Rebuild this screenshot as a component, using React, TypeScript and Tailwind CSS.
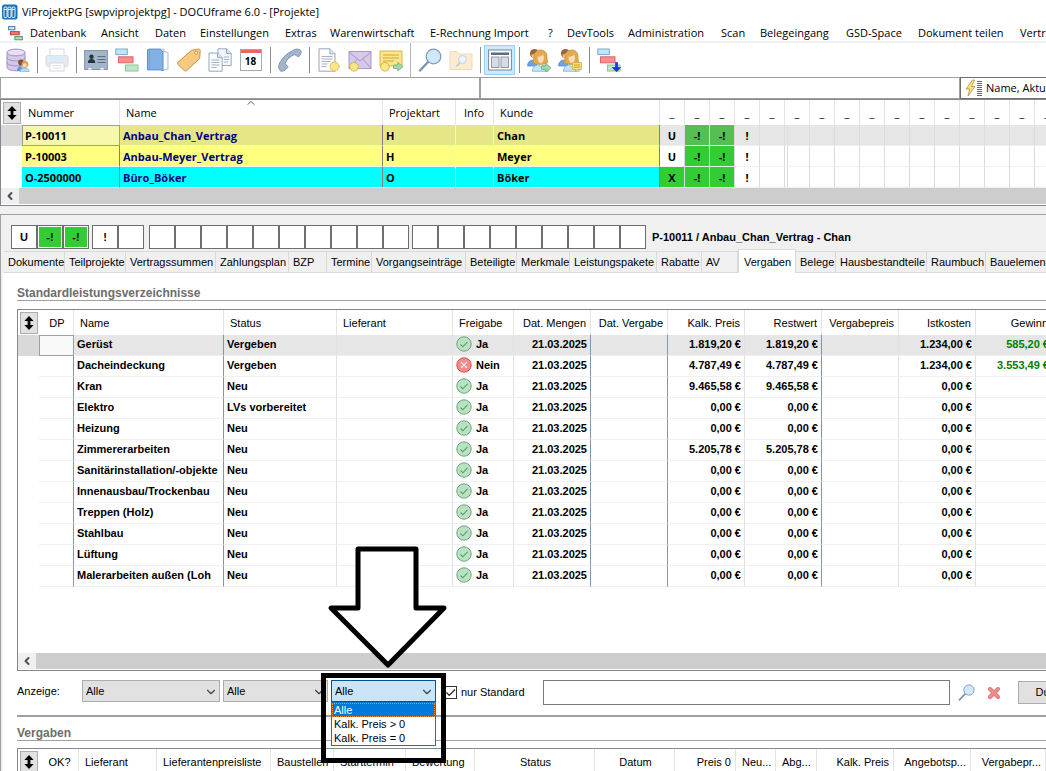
import React, { useState } from 'react';
import clsx from 'clsx';
import { ChevronDown, ChevronLeft } from 'lucide-react';

interface IconProps {
  children: React.ReactNode;
  className?: string;
}

const Svg: React.FC<IconProps> = ({ children, className = 'h-6 w-6' }) => (
  <svg viewBox="0 0 24 24" fill="none" className={className} aria-hidden="true">
    {children}
  </svg>
);

const MENU = [
  { label: 'Datenbank', width: 'w-[71px]' },
  { label: 'Ansicht', width: 'w-[54px]' },
  { label: 'Daten', width: 'w-[45px]' },
  { label: 'Einstellungen', width: 'w-[85px]' },
  { label: 'Extras', width: 'w-[45px]' },
  { label: 'Warenwirtschaft', width: 'w-[100px]' },
  { label: 'E-Rechnung Import', width: 'w-[118px]' },
  { label: '?', width: 'w-[19px]' },
  { label: 'DevTools', width: 'w-[61px]' },
  { label: 'Administration', width: 'w-[93px]' },
  { label: 'Scan', width: 'w-[39px]' },
  { label: 'Belegeingang', width: 'w-[86px]' },
  { label: 'GSD-Space', width: 'w-[72px]' },
  { label: 'Dokument teilen', width: 'w-[102px]' },
  { label: 'Vertrag', width: 'w-[60px]' },
];

/* ---------- toolbar icons ---------- */

const AppLogo = () => (
  <svg viewBox="0 0 16 16" className="h-4 w-4" aria-hidden="true">
    <rect x="0" y="0.5" width="15.5" height="15" rx="2.5" fill="#1673b8" />
    {[2, 6, 10].map((x) => (
      <g key={x}>
        <rect x={x} y="3" width="3" height="10.5" rx="1" fill="#1673b8" stroke="#fff" strokeWidth="0.9" />
        <path d={`M${x} 5.5h3`} stroke="#fff" strokeWidth="0.8" />
      </g>
    ))}
  </svg>
);

const Blocks: React.FC<{ className?: string; arrow?: boolean }> = ({ className, arrow }) => (
  <Svg className={className}>
    <rect x="0.8" y="1" width="11.5" height="5.6" fill="#bfe6fb" stroke="#7fa9cf" />
    <rect x="3.5" y="8.8" width="14.5" height="6" fill="#f78d8d" stroke="#dd6767" />
    <rect x="10.5" y="17" width="12.5" height="6" fill="#bfe5c4" stroke="#8dc497" />
    {arrow && <path d="M18.500 14.500v5h-3.200l4.200 4.300 4.200-4.300h-3.200v-5z" fill="#1838d8" stroke="#1129b8" strokeWidth="0.6" />}
  </Svg>
);

const MenuBlocks = () => (
  <Svg className="h-[15px] w-[15px]">
    <rect x="1" y="1" width="10" height="5" fill="#d6effc" stroke="#3b78b8" strokeWidth="1.6" />
    <rect x="4" y="9" width="14" height="5" fill="#e97d7d" stroke="#c23b3b" strokeWidth="1.6" />
    <rect x="11" y="17" width="12" height="5" fill="#b5dfbd" stroke="#4d9a62" strokeWidth="1.6" />
  </Svg>
);

const People: React.FC<{ badge?: 'arrow' | 'note' }> = ({ badge }) => (
  <Svg>
    <circle cx="7.5" cy="5.5" r="4.6" fill="#9c6245" />
    <path d="M4.5 6.5c2 0 4-1 5-2.500v6c-3 2-5 0-5-3.500z" fill="#f1c28f" />
    <path d="M.6 18c0-4 2-5.500 5-6l4 2v4z" fill="#6fa0e8" stroke="#4f7fcb" strokeWidth=".7" />
    <path d="M13.500 2c-4.500 0-6.500 3-6.500 7 0 3-.8 4-1.500 5.500 3 2.500 12 2.500 15.500 0C20 13 20 11 20 8.500 20 4.500 17.500 2 13.500 2z" fill="#e2a94d" stroke="#c08a37" strokeWidth=".7" />
    <path d="M10.200 8.500c3 0 5-1.200 6-2.500l1 3c0 4-1.500 6.300-3.500 6.300s-3.500-2.800-3.500-6.800z" fill="#fbdcb4" stroke="#d6a063" strokeWidth=".5" />
    <path d="M5.500 23.300c0-4.300 2.500-6 6-6.500l2.300 2 2.400-2c3.500.5 5 2.200 5 6.500z" fill="#c4e4fb" stroke="#7fb0d8" strokeWidth=".8" />
    {badge === 'arrow' && <path d="M14.500 18h4.300v-2.600L24 19.800l-5.200 4.200v-2.600h-4.300z" fill="#a4d9ac" stroke="#6fae7c" strokeWidth=".8" />}
    {badge === 'note' && (
      <>
        <path d="M14.500 14.500h9v7h-4l-2 2v-2h-3z" fill="#f8dc7c" stroke="#d2ae3d" strokeWidth=".8" />
        <path d="M16 17h6M16 19.200h6" stroke="#b48d28" strokeWidth=".7" />
      </>
    )}
  </Svg>
);

const DatabaseIcon = () => (
  <Svg>
    <path d="M1 4.500v14.800c0 2 4 3.500 9 3.500s9-1.500 9-3.500V4.500z" fill="#d6c8ea" stroke="#a291c0" />
    <ellipse cx="10" cy="4.500" rx="9" ry="3.400" fill="#e8def5" stroke="#a291c0" />
    <path d="M1 9.500c0 2 4 3.400 9 3.400s9-1.400 9-3.400M1 14.500c0 2 4 3.400 9 3.400s9-1.400 9-3.400" stroke="#a291c0" />
    <circle cx="15" cy="14.500" r="2.900" fill="#83513a" />
    <path d="M11 23c0-3 1.500-4.500 4-5l2 5z" fill="#5d92e0" />
    <circle cx="19" cy="16.300" r="3.400" fill="#dba24a" />
    <circle cx="18.700" cy="17.200" r="2" fill="#fbdcb4" />
    <path d="M13.800 24c0-2.800 2-4 4.700-4s4.700 1.200 4.700 4z" fill="#b4dcf8" stroke="#6fa2cd" strokeWidth=".6" />
  </Svg>
);

const PrinterIcon = () => (
  <Svg className="h-6 w-6 opacity-50">
    <rect x="5" y="1" width="14" height="8" fill="#fff" stroke="#aab6c2" />
    <rect x="1" y="7.500" width="22" height="11" rx="2" fill="#cfd9e4" stroke="#aab6c2" />
    <rect x="5" y="7.500" width="14" height="6" fill="#b6daf7" />
    <rect x="5" y="15" width="14" height="8" fill="#fff" stroke="#aab6c2" />
    <path d="M7.500 17.500h9M7.500 20h9" stroke="#b9c3ce" />
  </Svg>
);

const CardIcon = () => (
  <Svg>
    <rect x=".6" y="2.500" width="22.800" height="19" fill="#a3b5c9" stroke="#8296ac" />
    <circle cx="7.500" cy="8.700" r="2.200" fill="#26323f" />
    <path d="M3.800 15c0-3 1.500-4 3.700-4s3.700 1 3.700 4z" fill="#26323f" />
    <path d="M13.500 8.500h8M13.500 11.500h8M13.500 14.500h8" stroke="#5a6c80" />
    <path d="M4 21.500v-2h4v2M16 21.500v-2h4v2" fill="#fff" stroke="#8296ac" strokeWidth=".6" />
  </Svg>
);

const BookIcon = () => (
  <Svg>
    <path d="M16.500 3l5.500 1.500v16.500l-5.500 1.500z" fill="#f6fafe" stroke="#a8bdd6" />
    <path d="M3.500 1.200h14.500v2.300M16.500 5v16.500" stroke="#a8bdd6" />
    <path d="M1.500 1.800l2-.6h10.800l2.700 2.800v18.800l-2.700-.9H1.500z" fill="#82b1ea" stroke="#5f8fca" />
    <path d="M3.500 1.500v20.300" stroke="#6c9cd6" strokeWidth=".7" />
  </Svg>
);

const TagIcon = () => (
  <Svg>
    <path d="M14.500 2.300l7-1.300c1 0 1.700.6 1.700 1.500l-.5 8L9.500 22.700c-.6.6-1.400.6-2 0L.9 16.300c-.6-.6-.6-1.300 0-2z" fill="#f7c981" stroke="#c9953f" />
    <circle cx="19.200" cy="4.800" r="1.500" fill="#fff" stroke="#c9953f" />
  </Svg>
);

const DocsIcon = () => (
  <Svg>
    <path d="M10 .8h8.500l4.700 4.700v12H10z" fill="#f5f9fd" stroke="#96a7b8" />
    <path d="M18.500.8v4.700h4.700" fill="#d3e4f4" stroke="#96a7b8" />
    <path d="M1 5h8.500l4.700 4.700v13.500H1z" fill="#fbfdff" stroke="#96a7b8" />
    <path d="M9.500 5v4.700h4.700" fill="#d3e4f4" stroke="#96a7b8" />
    <path d="M3.500 12h8M3.500 14.500h8M3.500 17h8M3.500 19.500h5M16 9h5M16 11.500h5M16 14h4" stroke="#a2b0bd" />
  </Svg>
);

const CalendarIcon = () => (
  <span className="flex h-[22px] w-[22px] flex-col border border-[#a4aab2] bg-white">
    <span className="h-1 bg-[#f06464]" />
    <span className="flex-1 text-center font-['Open_Sans',sans-serif] text-[10px] leading-[17px] font-bold text-black">18</span>
  </span>
);

const PhoneIcon = () => (
  <Svg>
    <path d="M14.300 3c1.300-1.800 5.500-2.600 8-.9 1.600 1.300.8 4-1 6.100-.6.7-1.300.6-2 .1l-2.500-1.800C12 8.300 8.500 11.500 7 15.800l2.300 2c.7.600.7 1.300.1 2.100-1.700 2-4.800 4.100-6.700 3.100C.2 21.500.1 17.500 2.500 13.500 5.200 9 9.500 4.800 14.300 3z" fill="#a3b5ca" stroke="#7f93ab" />
  </Svg>
);

const DocBadgeIcon = () => (
  <Svg>
    <path d="M2 .8h11l5 5v17.400H2z" fill="#fafcfe" stroke="#9aa7b4" />
    <path d="M13 .8v5h5" fill="#dbe7f2" stroke="#9aa7b4" />
    <path d="M4.500 8.500h11M4.500 11h11M4.500 13.500h9M4.500 16h6M4.500 18.500h5" stroke="#a9b4bf" />
    <circle cx="17.500" cy="18.500" r="4.500" fill="#fbe688" stroke="#d3b544" strokeDasharray="2 .6" />
  </Svg>
);

const MailIcon = () => (
  <Svg>
    <rect x="1" y="3.500" width="22" height="17" fill="#d6c9ec" stroke="#a798c4" />
    <path d="M1 4l11 9 11-9M1 20l8.500-9M23 20l-8.500-9" stroke="#a798c4" />
    <circle cx="6" cy="18.800" r="4.300" fill="#fbe688" stroke="#d3b544" />
  </Svg>
);

const CertIcon = () => (
  <Svg>
    <rect x="1" y="3" width="22" height="15" fill="#fde58b" stroke="#d4b64f" />
    <path d="M4 7h16M4 10h16M4 13h11" stroke="#c9a93e" />
    <circle cx="6" cy="18.800" r="4.300" fill="#fbe688" stroke="#d3b544" />
    <path d="M14.500 17h4.300v-2.600L24 18.800l-5.200 4.200v-2.600h-4.300z" fill="#a4d9ac" stroke="#6fae7c" strokeWidth=".8" />
  </Svg>
);

const SearchIcon: React.FC<{ className?: string }> = ({ className }) => (
  <Svg className={className}>
    <path d="M10.500 13.500L2 22.500" stroke="#7f93a8" strokeWidth="2.400" strokeLinecap="round" />
    <circle cx="15.500" cy="8.500" r="7.300" fill="#cfe8fb" stroke="#7f9ab5" strokeWidth="1.200" />
  </Svg>
);

const FolderSearchIcon = () => (
  <Svg className="h-6 w-6 opacity-50">
    <path d="M1 21.500v-18h7l2 2.500h13v15.500z" fill="#fad9a0" stroke="#dfb87a" />
    <path d="M11.500 14l-4 4.500" stroke="#7f93a8" strokeWidth="1.600" />
    <circle cx="13.500" cy="11.500" r="4" fill="#d6ecfc" stroke="#8ba4bd" />
  </Svg>
);

const LayoutIcon = () => (
  <Svg>
    <rect x=".6" y="2" width="22.800" height="20" fill="#fff" stroke="#7b8794" />
    <rect x="3" y="4.500" width="18" height="2.500" fill="#5c6d80" />
    <rect x="3.500" y="9" width="7.500" height="10.500" fill="#d7dde4" stroke="#8f9ba8" />
    <rect x="13" y="9" width="7.500" height="10.500" fill="#d7dde4" stroke="#8f9ba8" />
  </Svg>
);

const ToolButton: React.FC<{ label: string; active?: boolean; children: React.ReactNode }> = ({ label, active, children }) => (
  <button
    type="button"
    aria-label={label}
    className={clsx(
      'flex h-[30px] w-[31px] shrink-0 items-center justify-center',
      active && 'border border-[#99d1ff] bg-[#cce8ff]'
    )}
  >
    {children}
  </button>
);

const Separator = () => (
  <span className="flex w-2 shrink-0 justify-center">
    <span className="h-[26px] w-px bg-[#8c8c8c]" />
  </span>
);

/* ---------- shared pieces ---------- */

const SortButton = () => (
  <button
    type="button"
    aria-label="Zeilen sortieren"
    className="mx-auto flex h-[22px] w-[18px] items-center justify-center border border-[#adadad] bg-[#e1e1e1]"
  >
    <svg viewBox="0 0 10 14" className="h-[14px] w-[10px]" aria-hidden="true">
      <path d="M5 0l4.600 5H6.400v4h3.200L5 14 .4 9h3.200V5H.4z" fill="#000" />
    </svg>
  </button>
);

const ScrollBar: React.FC<{ className?: string }> = ({ className }) => (
  <div className={clsx('flex h-4 bg-[#cdcdcd]', className)}>
    <button type="button" aria-label="Nach links" className="flex w-[18px] items-center justify-center bg-[#f0f0f0]">
      <ChevronLeft className="h-3 w-3 text-[#505050]" strokeWidth={4} />
    </button>
  </div>
);

const SectionTitle: React.FC<{ children: React.ReactNode }> = ({ children }) => (
  <h2 className="h-4 border-b border-[#a0a0a0] text-xs leading-4 font-bold text-[#6d6d6d]">{children}</h2>
);

const RoundCheck = () => (
  <svg viewBox="0 0 16 16" className="h-4 w-4 shrink-0" aria-hidden="true">
    <circle cx="8" cy="8" r="7.200" fill="#b9e2c0" stroke="#6aa57c" />
    <path d="M4.500 8.500l2.300 2.300 4.700-5" fill="none" stroke="#5d9a70" strokeWidth="1.100" />
  </svg>
);

const RoundCross = () => (
  <svg viewBox="0 0 16 16" className="h-4 w-4 shrink-0" aria-hidden="true">
    <circle cx="8" cy="8" r="7.200" fill="#f58a8a" stroke="#cf4f55" />
    <path d="M5.200 5.200l5.600 5.600M10.800 5.200l-5.600 5.600" stroke="#fff" strokeWidth="1.200" />
  </svg>
);

/* ---------- project list ---------- */

const FLAG_COLUMNS = Array.from({ length: 17 }, (_, i) => i);

const PROJECTS = [
  { number: 'P-10011', name: 'Anbau_Chan_Vertrag', type: 'H', customer: 'Chan', bg: 'bg-[#e6e686]', status: 'U', statusBg: 'bg-[#e6e6e6]', flagBg: 'bg-[#54c054]', restBg: 'bg-[#e6e6e6]' },
  { number: 'P-10003', name: 'Anbau-Meyer_Vertrag', type: 'H', customer: 'Meyer', bg: 'bg-[#ffff80]', status: 'U', statusBg: 'bg-white', flagBg: 'bg-[#32cd32]', restBg: 'bg-white' },
  { number: 'O-2500000', name: 'Büro_Böker', type: 'O', customer: 'Böker', bg: 'bg-[#00ffff]', status: 'X', statusBg: 'bg-[#32cd32]', flagBg: 'bg-[#32cd32]', restBg: 'bg-white' },
];

const ProjectTable = () => (
  <div className="overflow-hidden border-y border-l border-[#828790] bg-white pb-px">
    <table className="w-[1084px] table-fixed border-separate border-spacing-0 font-['Open_Sans',sans-serif] text-[11px]">
      <colgroup>
        <col className="w-[21px]" />
        <col className="w-[98px]" />
        <col className="w-[263px]" />
        <col className="w-[73px]" />
        <col className="w-[38px]" />
        <col className="w-[166px]" />
        {FLAG_COLUMNS.map((i) => (
          <col key={i} className="w-[25px]" />
        ))}
      </colgroup>
      <thead>
        <tr className="h-[25px] text-left">
          <th><SortButton /></th>
          <th className="border-r border-[#e5e5e5] px-[6px] pt-[2px] font-normal">Nummer</th>
          <th className="relative border-r border-[#e5e5e5] px-[6px] pt-[2px] font-normal">
            Name
            <svg viewBox="0 0 8 4" className="absolute top-px left-1/2 -ml-1 h-1 w-2" aria-hidden="true">
              <path d="M.5 3.700L4 .5l3.500 3.200" fill="none" stroke="#555" strokeWidth=".9" />
            </svg>
          </th>
          <th className="border-r border-[#e5e5e5] px-[6px] pt-[2px] font-normal">Projektart</th>
          <th className="border-r border-[#e5e5e5] px-2 pt-[2px] font-normal">Info</th>
          <th className="border-r border-[#e5e5e5] px-[6px] pt-[2px] font-normal">Kunde</th>
          {FLAG_COLUMNS.map((i) => (
            <th key={i} className="border-r border-[#e5e5e5] pt-[2px] text-center font-normal">_</th>
          ))}
        </tr>
      </thead>
      <tbody>
        {PROJECTS.map((p, row) => (
          <tr key={p.number} className="h-[21px] leading-[19px] font-bold text-black">
            <td className={row === 0 ? 'bg-[#d9d9d9]' : undefined} />
            <td
              className={clsx(
                'border-r border-b px-[2px]',
                row === 0 ? 'border border-[#a0a08c] bg-[#f8f8ad]' : 'border-r-[#808080] border-b-[#f0f0f0] pl-[3px]',
                row !== 0 && p.bg
              )}
            >
              {p.number}
            </td>
            <td className={clsx('border-r border-b border-r-[#808080] border-b-[#f0f0f0] px-[3px] text-[#000080]', p.bg)}>{p.name}</td>
            <td className={clsx('border-r border-b border-[#f0f0f0] px-[3px]', p.bg)}>{p.type}</td>
            <td className={clsx('border-r border-b border-[#f0f0f0]', p.bg)} />
            <td className={clsx('border-r border-b border-r-[#808080] border-b-[#f0f0f0] px-[3px]', p.bg)}>{p.customer}</td>
            {FLAG_COLUMNS.map((i) => (
              <td
                key={i}
                className={clsx(
                  'border-r border-b border-r-[#dcdce0] border-b-[#f0f0f0] text-center',
                  i === 0 ? p.statusBg : i < 3 ? p.flagBg : p.restBg
                )}
              >
                {i === 0 ? p.status : i < 3 ? '-!' : i === 3 ? '!' : ''}
                {/* frozen column divider */}
                {i === 5 && <div className="ml-[2px] h-5 w-px bg-[#dcdce0]" />}
              </td>
            ))}
          </tr>
        ))}
      </tbody>
    </table>
    <ScrollBar />
  </div>
);

/* ---------- detail panel ---------- */

const FLAG_GROUPS = [
  { cells: ['U', '-!', '-!'], gap: 'mr-[3px]' },
  { cells: ['!', ''], gap: 'mr-[5px]' },
  { cells: ['', '', '', ''], gap: '' },
  { cells: ['', '', '', '', '', ''], gap: 'mr-[3px]' },
  { cells: ['', '', '', ''], gap: '' },
  { cells: ['', '', '', '', ''], gap: '' },
];

const TABS = [
  { label: 'Dokumente', width: 'w-[61px]' },
  { label: 'Teilprojekte', width: 'w-[61px]' },
  { label: 'Vertragssummen', width: 'w-[90px]' },
  { label: 'Zahlungsplan', width: 'w-[73px]' },
  { label: 'BZP', width: 'w-[38px]' },
  { label: 'Termine', width: 'w-[45px]' },
  { label: 'Vorgangseinträge', width: 'w-[94px]' },
  { label: 'Beteiligte', width: 'w-[51px]' },
  { label: 'Merkmale', width: 'w-[53px]' },
  { label: 'Leistungspakete', width: 'w-[87px]' },
  { label: 'Rabatte', width: 'w-[45px]' },
  { label: 'AV', width: 'w-[36px]' },
  { label: 'Vergaben', width: 'w-[58px]' },
  { label: 'Belege', width: 'w-[40px]' },
  { label: 'Hausbestandteile', width: 'w-[91px]' },
  { label: 'Raumbuch', width: 'w-[59px]' },
  { label: 'Bauelemente', width: 'w-[76px]' },
];

interface Spec {
  name: string;
  status: string;
  released: boolean;
  price: string;
  costs: string;
  profit?: string;
}

const SPECS: Spec[] = [
  { name: 'Gerüst', status: 'Vergeben', released: true, price: '1.819,20 €', costs: '1.234,00 €', profit: '585,20 €' },
  { name: 'Dacheindeckung', status: 'Vergeben', released: false, price: '4.787,49 €', costs: '1.234,00 €', profit: '3.553,49 €' },
  { name: 'Kran', status: 'Neu', released: true, price: '9.465,58 €', costs: '0,00 €' },
  { name: 'Elektro', status: 'LVs vorbereitet', released: true, price: '0,00 €', costs: '0,00 €' },
  { name: 'Heizung', status: 'Neu', released: true, price: '0,00 €', costs: '0,00 €' },
  { name: 'Zimmererarbeiten', status: 'Neu', released: true, price: '5.205,78 €', costs: '0,00 €' },
  { name: 'Sanitärinstallation/-objekte', status: 'Neu', released: true, price: '0,00 €', costs: '0,00 €' },
  { name: 'Innenausbau/Trockenbau', status: 'Neu', released: true, price: '0,00 €', costs: '0,00 €' },
  { name: 'Treppen (Holz)', status: 'Neu', released: true, price: '0,00 €', costs: '0,00 €' },
  { name: 'Stahlbau', status: 'Neu', released: true, price: '0,00 €', costs: '0,00 €' },
  { name: 'Lüftung', status: 'Neu', released: true, price: '0,00 €', costs: '0,00 €' },
  { name: 'Malerarbeiten außen (Loh', status: 'Neu', released: true, price: '0,00 €', costs: '0,00 €' },
];

const SPEC_COLUMNS = [
  { label: 'DP', width: 'w-[35px]', align: 'text-center' },
  { label: 'Name', width: 'w-[150px]', align: 'text-left' },
  { label: 'Status', width: 'w-[113px]', align: 'text-left' },
  { label: 'Lieferant', width: 'w-[116px]', align: 'text-left' },
  { label: 'Freigabe', width: 'w-[61px]', align: 'text-left' },
  { label: 'Dat. Mengen', width: 'w-[77px]', align: 'text-right' },
  { label: 'Dat. Vergabe', width: 'w-[77px]', align: 'text-right' },
  { label: 'Kalk. Preis', width: 'w-[77px]', align: 'text-right' },
  { label: 'Restwert', width: 'w-[77px]', align: 'text-right' },
  { label: 'Vergabepreis', width: 'w-[77px]', align: 'text-right' },
  { label: 'Istkosten', width: 'w-[77px]', align: 'text-right' },
  { label: 'Gewinn', width: 'w-[77px]', align: 'text-right' },
];

const SpecTable = () => (
  <div className="mt-2 overflow-hidden border-y border-l border-[#828790] bg-white pb-px">
    <table className="w-[1035px] table-fixed border-separate border-spacing-0">
      <colgroup>
        <col className="w-[21px]" />
        {SPEC_COLUMNS.map((c) => (
          <col key={c.label} className={c.width} />
        ))}
      </colgroup>
      <thead>
        <tr className="h-[25px]">
          <th><SortButton /></th>
          {SPEC_COLUMNS.map((c) => (
            <th key={c.label} className={clsx('border-r border-[#e5e5e5] pt-[2px] pr-1 pl-[6px] font-normal whitespace-nowrap', c.align)}>
              {c.label}
            </th>
          ))}
        </tr>
      </thead>
      <tbody>
        {SPECS.map((s, row) => {
          const light = 'border-r border-b border-r-[#e2e2e4] border-b-[#f0f0f0]';
          const dark = 'border-r border-b border-r-[#8496ac] border-b-[#f0f0f0]';
          return (
            <tr key={s.name} className={clsx('h-[21px] align-top leading-[18px] font-bold whitespace-nowrap', row === 0 && 'bg-[#e6e6e6]')}>
              <td className={row === 0 ? 'bg-[#d9d9d9]' : undefined} />
              <td className={row === 0 ? 'border border-[#a0a0a0] bg-[#f9f9f9]' : dark} />
              <td className={clsx(dark, 'px-[3px]')}>
                <div className="overflow-hidden">{s.name}</div>
              </td>
              <td className={clsx(light, 'px-[3px]')}>{s.status}</td>
              <td className={light} />
              <td className={clsx(light, 'px-[3px]')}>
                <span className="flex items-center gap-1">
                  {s.released ? <RoundCheck /> : <RoundCross />}
                  {s.released ? 'Ja' : 'Nein'}
                </span>
              </td>
              <td className={clsx(dark, 'px-[3px] text-right')}>21.03.2025</td>
              <td className={dark} />
              <td className={clsx(light, 'px-[3px] text-right')}>{s.price}</td>
              <td className={clsx(dark, 'px-[3px] text-right')}>{s.price}</td>
              <td className={light} />
              <td className={clsx(light, 'px-[3px] text-right')}>{s.costs}</td>
              <td className={clsx(light, 'px-[3px] text-right text-[#008000]')}>{s.profit}</td>
            </tr>
          );
        })}
      </tbody>
    </table>
    <ScrollBar className="mt-[66px]" />
  </div>
);

const AWARD_COLUMNS = [
  { label: 'OK?', width: 'w-[40px]', align: 'text-center' },
  { label: 'Lieferant', width: 'w-[78px]', align: 'text-left' },
  { label: 'Lieferantenpreisliste', width: 'w-[114px]', align: 'text-left' },
  { label: 'Baustellen', width: 'w-[63px]', align: 'text-left' },
  { label: 'Starttermin', width: 'w-[72px]', align: 'text-left' },
  { label: 'Bewertung', width: 'w-[69px]', align: 'text-left' },
  { label: 'Status', width: 'w-[120px]', align: 'text-center' },
  { label: 'Datum', width: 'w-[80px]', align: 'text-center' },
  { label: 'Preis 0', width: 'w-[61px]', align: 'text-right' },
  { label: 'Neu...', width: 'w-[40px]', align: 'text-left' },
  { label: 'Abg...', width: 'w-[41px]', align: 'text-left' },
  { label: 'Kalk. Preis', width: 'w-[77px]', align: 'text-right' },
  { label: 'Angebotsp...', width: 'w-[77px]', align: 'text-right' },
  { label: 'Vergabepr...', width: 'w-[75px]', align: 'text-right' },
];

const AwardTable = () => (
  <div className="mt-[7px] flex-1 overflow-hidden border-t border-l border-[#828790] bg-white">
    <table className="w-[1028px] table-fixed border-separate border-spacing-0">
      <colgroup>
        <col className="w-[21px]" />
        {AWARD_COLUMNS.map((c) => (
          <col key={c.label} className={c.width} />
        ))}
      </colgroup>
      <thead>
        <tr className="h-[25px]">
          <th><SortButton /></th>
          {AWARD_COLUMNS.map((c) => (
            <th key={c.label} className={clsx('border-r border-[#e5e5e5] pt-[2px] pr-1 pl-[6px] font-normal whitespace-nowrap', c.align)}>
              {c.label}
            </th>
          ))}
        </tr>
      </thead>
    </table>
  </div>
);

const PRICE_FILTERS = ['Alle', 'Kalk. Preis > 0', 'Kalk. Preis = 0'];

const FilterSelect: React.FC<{ label: string; width: string; options: string[]; open?: boolean }> = ({ label, width, options, open }) => (
  <span className={clsx('relative block h-[22px] shrink-0', width)}>
    <select
      aria-label={label}
      className={clsx(
        'h-full w-full appearance-none border pl-[3px]',
        open ? 'border-[#005499] bg-[#cce4f7]' : 'border-[#adadad] bg-[#e1e1e1]'
      )}
    >
      {options.map((o) => (
        <option key={o}>{o}</option>
      ))}
    </select>
    <ChevronDown className="pointer-events-none absolute top-[5px] right-[2px] h-[14px] w-[14px] text-[#404040]" strokeWidth={2} />
  </span>
);

const FilterBar = () => {
  const [standardOnly, setStandardOnly] = useState(true);
  const [query, setQuery] = useState('');

  return (
    <div className="mt-[9px] flex h-6 items-start">
      <span className="w-[65px] shrink-0 leading-[22px]">Anzeige:</span>
      <div className="flex shrink-0 gap-[3px]">
        <FilterSelect label="Status" width="w-[138px]" options={['Alle']} />
        <FilterSelect label="Freigabe" width="w-[105px]" options={['Alle']} />
        <div className="relative">
          <FilterSelect label="Kalkulierter Preis" width="w-[105px]" options={PRICE_FILTERS} open />
          <ul role="listbox" className="absolute top-full left-0 z-10 w-full border border-[#0078d7] bg-white leading-[14px]">
            {PRICE_FILTERS.map((f, i) => (
              <li
                key={f}
                role="option"
                aria-selected={i === 0}
                className={clsx('px-px', i === 0 ? 'border border-dotted border-[#ff8728] bg-[#0078d7] leading-[12px] text-white' : 'pl-[2px]')}
              >
                {f}
              </li>
            ))}
          </ul>
          {/* callout frame and arrow */}
          <div className="pointer-events-none absolute -top-[7px] -left-[10px] z-20 h-[90px] w-[125px] border-[5px] border-black" />
          <svg
            viewBox="0 0 122 124"
            className="pointer-events-none absolute bottom-full -left-[4px] z-20 mb-[11px] h-[124px] w-[122px]"
            aria-hidden="true"
          >
            <path d="M31 4h58v59h28L61 120 4 63h27z" fill="#fff" stroke="#000" strokeWidth="5" strokeLinejoin="round" />
          </svg>
        </div>
      </div>
      <label className="ml-2 flex h-6 shrink-0 items-center gap-1">
        <span className="relative block h-[13px] w-[13px]">
          <input
            type="checkbox"
            checked={standardOnly}
            onChange={(e) => setStandardOnly(e.target.checked)}
            className="peer block h-[13px] w-[13px] appearance-none border border-[#333] bg-white"
          />
          <svg viewBox="0 0 13 13" className="pointer-events-none absolute inset-0 hidden h-[13px] w-[13px] peer-checked:block" aria-hidden="true">
            <path d="M2.500 6.500L5.300 9.300 11 3.500" fill="none" stroke="#222" strokeWidth="1.200" />
          </svg>
        </span>
        nur Standard
      </label>
      <input
        type="text"
        aria-label="Suchbegriff"
        value={query}
        onChange={(e) => setQuery(e.target.value)}
        className="ml-[18px] h-[25px] w-[407px] shrink-0 border border-[#7a7a7a] bg-white px-1"
      />
      <button type="button" aria-label="Suchen" className="ml-2 shrink-0 pt-1">
        <SearchIcon className="h-[17px] w-[17px]" />
      </button>
      <button type="button" aria-label="Suche löschen" className="ml-3 shrink-0 pt-[6px]">
        <svg viewBox="0 0 14 14" className="h-[14px] w-[14px]" aria-hidden="true">
          <path d="M3 3l8 8M11 3l-8 8" stroke="#dc6a6a" strokeWidth="4" strokeLinecap="round" />
          <path d="M3 3l8 8M11 3l-8 8" stroke="#f08c8c" strokeWidth="2.600" strokeLinecap="round" />
        </svg>
      </button>
      <button type="button" className="mt-px ml-[17px] h-[23px] shrink-0 border border-[#adadad] bg-[#e1e1e1] px-[17px]">
        Durchsuchen
      </button>
    </div>
  );
};

const DetailPanel = () => {
  const [activeTab, setActiveTab] = useState('Vergaben');

  return (
    <div className="mt-2 flex min-h-0 flex-1 flex-col border-t border-l border-[#a0a0a0] pt-[10px] pl-[2px]">
      <div className="flex h-6 items-center pl-2">
        {FLAG_GROUPS.map((g, gi) => (
          <div key={gi} className={clsx('flex shrink-0', g.gap)}>
            {g.cells.map((c, i) => (
              <span key={i} className="h-6 w-[26px] border border-[#6e6e6e] bg-white p-px text-center leading-[20px] font-bold">
                <span className={clsx('block h-full', c === '-!' && 'bg-[#32cd32]')}>{c}</span>
              </span>
            ))}
          </div>
        ))}
        <strong className="ml-[6px] whitespace-nowrap">P-10011 / Anbau_Chan_Vertrag - Chan</strong>
      </div>
      <div role="tablist" className="flex h-6 items-end pl-px">
        {TABS.map((t) => {
          const active = t.label === activeTab;
          return (
            <button
              key={t.label}
              type="button"
              role="tab"
              aria-selected={active}
              onClick={() => setActiveTab(t.label)}
              className={clsx(
                'shrink-0 border-[#d9d9d9] text-left whitespace-nowrap',
                t.width,
                active ? 'h-6 border-t border-r border-l bg-white pl-[5px] leading-[22px]' : 'h-[22px] border-t border-r border-b pl-1'
              )}
            >
              {t.label}
            </button>
          );
        })}
      </div>
      <div className="flex min-h-0 flex-1 flex-col bg-white pt-3 pl-[14px]">
        <SectionTitle>Standardleistungsverzeichnisse</SectionTitle>
        <SpecTable />
        <FilterBar />
        <hr className="mt-[11px] mb-2 border-t-2 border-[#a0a0a0]" />
        <SectionTitle>Vergaben</SectionTitle>
        <AwardTable />
      </div>
    </div>
  );
};

export default function App() {
  return (
    <div className="flex h-screen flex-col overflow-hidden bg-[#f0f0f0] font-['Liberation_Sans',Arial,sans-serif] text-[11px] text-black">
      <header className="bg-white font-['Open_Sans',sans-serif]">
        <div className="flex h-[22px] items-center gap-1 pt-[2px] pl-[2px]">
          <AppLogo />
          <h1>ViProjektPG [swpviprojektpg] - DOCUframe 6.0 - [Projekte]</h1>
        </div>
        <nav className="flex h-[21px] items-center border-b-2 border-[#f0f0f0] pt-[3px] pl-2">
          <span className="w-[22px] shrink-0"><MenuBlocks /></span>
          {MENU.map((m) => (
            <button key={m.label} type="button" className={clsx('shrink-0 text-left whitespace-nowrap', m.width)}>
              {m.label}
            </button>
          ))}
        </nav>
      </header>

      <div className="flex h-[34px] shrink-0 items-center bg-white pl-[2px]">
        <ToolButton label="Datenbank"><DatabaseIcon /></ToolButton>
        <Separator />
        <ToolButton label="Drucken"><PrinterIcon /></ToolButton>
        <Separator />
        <ToolButton label="Adressen"><CardIcon /></ToolButton>
        <ToolButton label="Projekte"><Blocks /></ToolButton>
        <ToolButton label="Katalog"><BookIcon /></ToolButton>
        <ToolButton label="Artikel"><TagIcon /></ToolButton>
        <ToolButton label="Belege"><DocsIcon /></ToolButton>
        <ToolButton label="Kalender"><CalendarIcon /></ToolButton>
        <Separator />
        <ToolButton label="Telefon"><PhoneIcon /></ToolButton>
        <Separator />
        <ToolButton label="Neues Dokument"><DocBadgeIcon /></ToolButton>
        <ToolButton label="Neue E-Mail"><MailIcon /></ToolButton>
        <ToolButton label="Neue Notiz"><CertIcon /></ToolButton>
        <span className="flex w-2 shrink-0 justify-center self-stretch">
          <span className="w-px bg-[#b4b4b4]" />
        </span>
        <ToolButton label="Suchen"><SearchIcon /></ToolButton>
        <ToolButton label="Ordner durchsuchen"><FolderSearchIcon /></ToolButton>
        <Separator />
        <ToolButton label="Detailansicht" active><LayoutIcon /></ToolButton>
        <Separator />
        <ToolButton label="Kontakte übergeben"><People badge="arrow" /></ToolButton>
        <ToolButton label="Kontaktnotiz"><People badge="note" /></ToolButton>
        <Separator />
        <ToolButton label="Projekt einfügen"><Blocks arrow /></ToolButton>
      </div>

      <div className="flex h-[22px] shrink-0 font-['Open_Sans',sans-serif]">
        <input type="text" aria-label="Suche Nummer" className="w-[480px] shrink-0 border border-[#a0a0a5] bg-white px-1" />
        <input type="text" aria-label="Suche Name" className="min-w-0 flex-1 border border-[#a0a0a5] bg-white px-1" />
        <button type="button" className="flex w-[86px] shrink-0 items-center overflow-hidden border border-r-0 border-[#6e6e6e] bg-white pl-1 whitespace-nowrap">
          <svg viewBox="0 0 18 18" className="mr-[3px] h-[18px] w-[18px] shrink-0" aria-hidden="true">
            <path d="M7.500 1L1 10h3.700L3 17l7-9.500H6.500L9.500 1z" fill="#fbe07f" stroke="#b89c4c" strokeWidth=".9" strokeLinejoin="round" />
            <path d="M12 2.500h5M12 4.500h5M12 6.500h5M12 8.500h5M12 10.500h5M12 12.500h5M12 14.500h5M12 16.500h5" stroke="#666" />
          </svg>
          Name, Aktueller
        </button>
      </div>

      <ProjectTable />
      <DetailPanel />
    </div>
  );
}
